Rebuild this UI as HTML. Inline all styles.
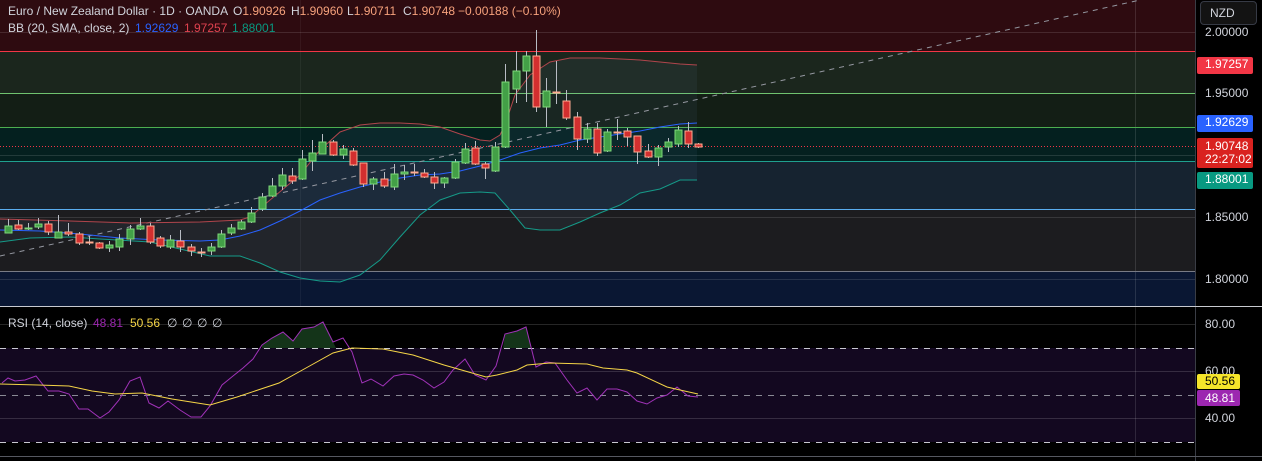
<!DOCTYPE html>
<html><head><meta charset="utf-8"><style>
html,body{margin:0;padding:0;background:#000;width:1262px;height:461px;overflow:hidden;font-family:"Liberation Sans",sans-serif}
svg{position:absolute;left:0;top:0}
.t{position:absolute;font-size:12px;color:#d1d4dc;white-space:nowrap;line-height:14px}
.lbl{position:absolute;font-size:12px;line-height:15px;padding-left:8px;box-sizing:border-box;white-space:nowrap;border-radius:2px}
</style></head><body>
<svg width="1262" height="461" xmlns="http://www.w3.org/2000/svg">
<rect x="0" y="0" width="1195" height="51" fill="#2e0b10"/>
<rect x="0" y="51" width="1195" height="42" fill="#1b261d"/>
<rect x="0" y="93" width="1195" height="34" fill="#131e15"/>
<rect x="0" y="127" width="1195" height="34" fill="#04201f"/>
<rect x="0" y="161" width="1195" height="48" fill="#162330"/>
<rect x="0" y="209" width="1195" height="62" fill="#1c1c1f"/>
<rect x="0" y="271" width="1195" height="35" fill="#0a1733"/>
<g stroke="#ffffff" stroke-opacity="0.12" stroke-width="1">
<line x1="0" y1="32.5" x2="1195" y2="32.5"/>
<line x1="0" y1="155.5" x2="1195" y2="155.5"/>
<line x1="0" y1="217.5" x2="1195" y2="217.5"/>
<line x1="0" y1="279.5" x2="1195" y2="279.5"/>
<line x1="1135.5" y1="0" x2="1135.5" y2="456"/>
<line x1="300.5" y1="0" x2="300.5" y2="306" stroke-opacity="0.05"/>
</g>
<line x1="0" y1="51.5" x2="1195" y2="51.5" stroke="#f23645"/>
<line x1="0" y1="93.5" x2="1195" y2="93.5" stroke="#6fc36f"/>
<line x1="0" y1="127.5" x2="1195" y2="127.5" stroke="#4caf50"/>
<line x1="0" y1="161.5" x2="1195" y2="161.5" stroke="#1fa08f"/>
<line x1="0" y1="209.5" x2="1195" y2="209.5" stroke="#5aaef0"/>
<line x1="0" y1="271.5" x2="1195" y2="271.5" stroke="#787b86"/>
<polygon fill="#6fa0d8" fill-opacity="0.07" points="0,219 70,221 130,223 200,222 240,220 250,217 270,200 300,175 320,150 340,132 360,125 380,123 400,123 420,124 440,127 460,134 480,140 490,141 500,135 505,125 515,95 530,75 550,62 570,58 600,58 640,60 660,62 680,64 697,65 697,180 680,180 660,189 640,193 620,205 600,213 580,222 560,230 540,230 525,228 510,210 495,193 480,192 460,193 440,200 420,215 400,237 380,260 360,275 340,282 320,281 300,278 280,272 260,263 240,256 210,256 150,242 100,239 70,237 30,238 0,242"/>
<line x1="0" y1="256" x2="1140" y2="0" stroke="#9598a1" stroke-width="1" stroke-dasharray="5,5"/>
<polyline fill="none" stroke="#b0454c" stroke-width="1" points="0,219 70,221 130,223 200,222 240,220 250,217 270,200 300,175 320,150 340,132 360,125 380,123 400,123 420,124 440,127 460,134 480,140 490,141 500,135 505,125 515,95 530,75 550,62 570,58 600,58 640,60 660,62 680,64 697,65"/>
<polyline fill="none" stroke="#2962ff" stroke-width="1" points="0,230 40,231 80,234 120,238 160,240 200,241 220,240 240,236 260,230 280,221 300,211 320,200 340,193 360,187 380,182 400,178 420,175 440,174 460,171 480,166 500,160 520,153 540,148 560,145 580,140 600,137 620,134 640,131 660,127 680,124 697,123"/>
<polyline fill="none" stroke="#159a88" stroke-width="1" points="0,242 30,238 70,237 100,239 150,242 210,256 240,256 260,263 280,272 300,278 320,281 340,282 360,275 380,260 400,237 420,215 440,200 460,193 480,192 495,193 510,210 525,228 540,230 560,230 580,222 600,213 620,205 640,193 660,189 680,180 697,180"/>
<line x1="0" y1="146.5" x2="1195" y2="146.5" stroke="#f23645" stroke-dasharray="1,2"/>
<g id="c" stroke-width="1"></g>
<rect x="0" y="307" width="1195" height="149" fill="#000"/>
<rect x="0" y="348" width="1195" height="94" fill="#130820"/>
<g stroke="#ffffff" stroke-opacity="0.15">
<line x1="0" y1="324.5" x2="1195" y2="324.5"/>
<line x1="0" y1="371.5" x2="1195" y2="371.5"/>
<line x1="0" y1="418.5" x2="1195" y2="418.5"/>
</g>
<line x1="1135.5" y1="307" x2="1135.5" y2="456" stroke="#ffffff" stroke-opacity="0.12"/>
<line x1="0" y1="348.5" x2="1195" y2="348.5" stroke="#c8c8d0" stroke-dasharray="6,6"/>
<line x1="0" y1="395.5" x2="1195" y2="395.5" stroke="#8a8a95" stroke-dasharray="6,6"/>
<line x1="0" y1="442.5" x2="1195" y2="442.5" stroke="#c8c8d0" stroke-dasharray="6,6"/>
<polygon fill="#1d4a24" fill-opacity="0.7" points="262,348 262,345 272,338 283,332 293,341 302,329 314,327 323,322 333,342 336,348"/>
<polygon fill="#1d4a24" fill-opacity="0.7" points="503,348 505,334 517,331 526,327 531,348"/>
<polyline fill="none" stroke="#a032b8" stroke-width="1" points="2,383 8,378 15,381 25,380 36,376 48,391 59,391 69,394 79,409 88,409 100,418 109,412 119,400 130,381 140,377 149,403 159,408 168,401 180,410 191,417 201,417 210,406 222,385 233,376 243,368 253,359 262,345 272,338 283,332 293,341 302,329 314,327 323,322 333,342 343,338 352,352 362,383 371,379 383,386 394,376 404,374 413,375 423,380 434,388 444,382 453,370 465,359 475,375 486,380 496,366 505,334 517,331 526,327 536,367 546,362 555,363 567,380 577,393 587,388 597,400 607,389 617,389 627,392 637,401 647,404 657,398 667,395 677,387 688,396 698,397"/>
<polyline fill="none" stroke="#f5d547" stroke-width="1" points="0,384 38,385 69,386 92,391 115,394 142,393 172,399 210,405 237,397 279,383 306,368 333,353 352,348 383,349 413,355 444,365 486,377 497,375 517,370 527,365 550,363 587,364 603,368 627,370 637,373 667,387 680,390 698,394"/>
<rect x="1195" y="0" width="67" height="461" fill="#000"/>
<line x1="1195.5" y1="0" x2="1195.5" y2="461" stroke="#3a3d45"/>
<line x1="0" y1="306.5" x2="1262" y2="306.5" stroke="#c8cad0"/>
<line x1="0" y1="456.5" x2="1262" y2="456.5" stroke="#555860"/>
</svg>
<div class="t" style="left:8px;top:4px">Euro / New Zealand Dollar · 1D · OANDA</div>
<div class="t" style="left:233px;top:4px">O<span style="color:#f7a27c">1.90926</span></div>
<div class="t" style="left:291px;top:4px">H<span style="color:#f7a27c">1.90960</span></div>
<div class="t" style="left:347px;top:4px">L<span style="color:#f7a27c">1.90711</span></div>
<div class="t" style="left:403px;top:4px">C<span style="color:#f7a27c">1.90748</span></div>
<div class="t" style="left:458px;top:4px;color:#f7a27c">−0.00188 (−0.10%)</div>
<div class="t" style="left:8px;top:21px">BB (20, SMA, close, 2)</div>
<div class="t" style="left:135px;top:21px;color:#2962ff">1.92629</div>
<div class="t" style="left:184px;top:21px;color:#e0424f">1.97257</div>
<div class="t" style="left:232px;top:21px;color:#089981">1.88001</div>
<div class="t" style="left:8px;top:316px">RSI (14, close)</div>
<div class="t" style="left:93px;top:316px;color:#9c27b0">48.81</div>
<div class="t" style="left:130px;top:316px;color:#f5d547">50.56</div>
<div class="t" style="left:167px;top:316px">∅</div>
<div class="t" style="left:182px;top:316px">∅</div>
<div class="t" style="left:197px;top:316px">∅</div>
<div class="t" style="left:212px;top:316px">∅</div>
<div class="t" style="left:1205px;top:25px">2.00000</div>
<div style="position:absolute;left:1200px;top:1px;width:57px;height:24px;background:#131313;border:1px solid #363a45;border-radius:4px;box-sizing:border-box;color:#d1d4dc;font-size:12px;line-height:22px;padding-left:9px">NZD</div>
<div class="t" style="left:1205px;top:86px">1.95000</div>
<div class="t" style="left:1205px;top:210px">1.85000</div>
<div class="t" style="left:1205px;top:272px">1.80000</div>
<div class="t" style="left:1205px;top:317px">80.00</div>
<div class="t" style="left:1205px;top:364px">60.00</div>
<div class="t" style="left:1205px;top:411px">40.00</div>
<div class="lbl" style="left:1197px;top:57px;width:56px;height:17px;background:#f23645;color:#fff">1.97257</div>
<div class="lbl" style="left:1197px;top:115px;width:56px;height:17px;background:#2962ff;color:#fff">1.92629</div>
<div class="lbl" style="left:1197px;top:138px;width:56px;height:30px;background:#d9221f;color:#fff;line-height:13px;padding-top:2px">1.90748<br>22:27:02</div>
<div class="lbl" style="left:1197px;top:172px;width:56px;height:17px;background:#089981;color:#fff">1.88001</div>
<div class="lbl" style="left:1197px;top:374px;width:43px;height:15px;background:#f5e52a;color:#000;line-height:15px">50.56</div>
<div class="lbl" style="left:1197px;top:390px;width:43px;height:16px;background:#9c27b0;color:#fff;line-height:16px">48.81</div>
<script>
var d=[[8,226,233,219,233,'G'],[18,225,229,220,230,'R'],[28,228,229,223,230,'G'],[38,224,227,218,229,'G'],[48,224,232,221,235,'R'],[58,232,238,215,238,'G'],[68,232,234,223,236,'R'],[79,234,243,232,245,'R'],[89,242,243,236,245,'D'],[99,243,248,242,249,'R'],[109,245,248,241,252,'G'],[119,239,247,234,251,'G'],[130,229,239,225,245,'G'],[140,226,229,218,230,'G'],[150,226,242,223,244,'R'],[160,238,246,236,248,'R'],[170,240,247,235,249,'G'],[180,241,247,230,252,'R'],[191,247,251,244,256,'R'],[201,252,253,248,257,'D'],[211,247,251,243,255,'G'],[221,234,247,230,248,'G'],[231,228,233,224,235,'G'],[241,222,229,220,230,'G'],[251,213,222,207,223,'G'],[262,197,209,193,211,'G'],[272,186,196,178,197,'G'],[282,175,186,168,190,'G'],[292,176,181,168,184,'R'],[302,159,179,150,180,'G'],[312,153,161,140,171,'G'],[322,142,154,134,154,'G'],[333,142,155,140,156,'R'],[343,149,155,145,159,'G'],[353,151,165,148,166,'R'],[363,163,184,163,187,'R'],[373,179,184,177,190,'G'],[384,179,186,172,188,'R'],[394,174,187,164,190,'G'],[404,172,174,165,180,'G'],[414,172,173,164,176,'D'],[424,173,177,169,178,'R'],[434,177,183,172,189,'R'],[444,178,183,177,188,'G'],[455,162,178,159,179,'G'],[465,149,163,143,164,'G'],[475,148,164,141,165,'R'],[485,164,168,162,179,'R'],[495,147,171,142,172,'G'],[505,82,147,64,148,'G'],[516,71,89,51,103,'G'],[526,56,71,51,102,'G'],[536,56,107,30,112,'R'],[546,91,107,78,127,'G'],[556,92,93,61,104,'D'],[566,101,118,90,120,'R'],[577,117,139,112,150,'R'],[587,129,139,123,143,'G'],[597,129,153,123,156,'R'],[607,132,151,129,152,'G'],[617,132,133,119,140,'D'],[627,131,137,128,146,'R'],[637,136,152,136,164,'R'],[648,151,157,144,158,'R'],[658,148,157,145,166,'G'],[668,142,147,138,152,'G'],[678,130,144,126,147,'G'],[688,131,144,122,148,'R'],[698,144,147,143,148,'R']];
var s='';d.forEach(function(c){var x=c[0];s+='<line x1="'+(x+0.5)+'" y1="'+c[3]+'" x2="'+(x+0.5)+'" y2="'+c[4]+'" stroke="#b8bcc4"/>';
var f=c[5]=='R'?'#d32f2f':(c[5]=='G'?'#43a047':'#ffab91'),st=c[5]=='R'?'#ffab91':(c[5]=='G'?'#7ed77a':'#ffab91');
var h=Math.max(c[2]-c[1],1);s+='<rect x="'+(x-3)+'" y="'+c[1]+'" width="7" height="'+h+'" fill="'+f+'" stroke="'+st+'"/>';});
document.getElementById('c').innerHTML=s;
</script>
</body></html>
